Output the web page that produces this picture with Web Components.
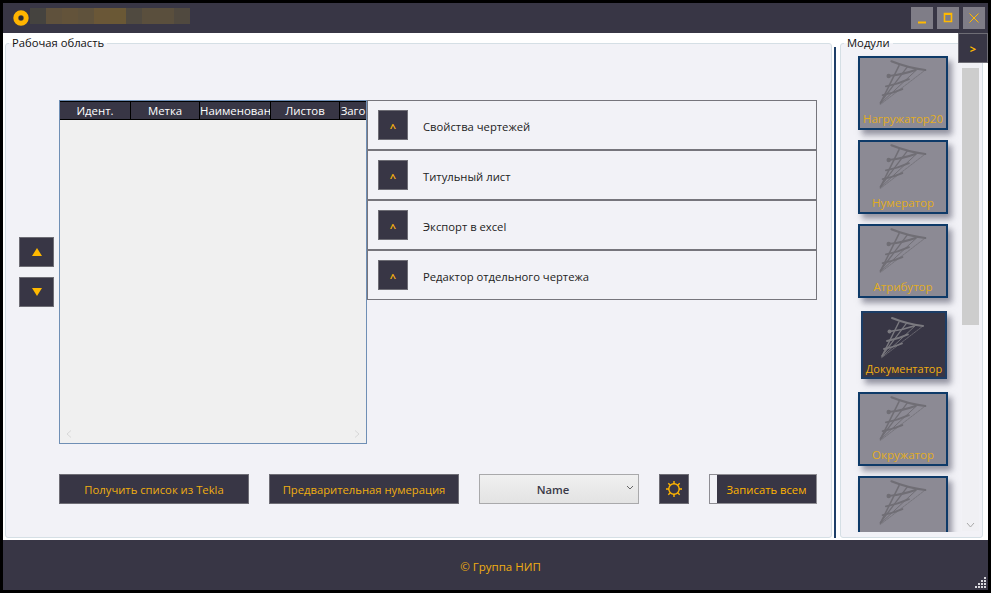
<!DOCTYPE html>
<html lang="ru">
<head>
<meta charset="utf-8">
<title>Документатор</title>
<style>
  html, body { margin: 0; height: 100%; }
  body { background: #000; font: 11.25px "Open Sans", "Noto Sans", sans-serif; overflow: hidden; }
</style>
</head>
<body>
<app-window>
  <title-bar slot="title"></title-bar>
  <group-box slot="work" label="Рабочая область" style="flex:1"><work-area></work-area></group-box>
  <group-box slot="modules" label="Модули" style="width:143px"><module-list></module-list></group-box>
</app-window>

<script>
(function() {
  'use strict';

  const AMBER = '#f0ae10';

  const webIcon = (w, h) => `
    <svg class="web" width="${w}" height="${h}" viewBox="0 0 50 44" fill="none" stroke="currentColor" stroke-linecap="round">
      <path d="M13 3Q28 9 44 11" stroke-width="2"/>
      <path d="M20 7L3.3 40.6" stroke-width="1.4"/>
      <path d="M27.6 8.2L2.7 41.2" stroke-width="1.2"/>
      <path d="M36.7 10.3L2.7 42" stroke-width=".9"/>
      <path d="M44 11L3 42.5" stroke-width=".7" stroke-dasharray="2 1"/>
      <path d="M11 16.4Q24 15 35 11M8 26Q19 24 29 19.4M5 34Q15 32 23 28.5" stroke-width="1.8"/>
      <circle cx="10.5" cy="16.5" r="2"  fill="currentColor" stroke="none"/>
    </svg>`;

  // base class so every element just declares its template
  class Base extends HTMLElement {
    constructor() {
      super();
      this.attachShadow({ mode: 'open' });
    }
    connectedCallback() {
      this.shadowRoot.innerHTML = this.render();
    }
  }

  class AppWindow extends Base {
    render() {
      return `
        <style>
          :host { display: flex; flex-direction: column; position: absolute; inset: 3px; background: #fff; }
          main { flex: 1; display: flex; min-height: 0; padding: 5px 5px 2px 2px; background: #fff; }
          .split { width: 2px; margin: 9px 4px 0 2px; background: #1f3f68; }
          footer { height: 50px; background: #383645; color: ${AMBER}; display: flex; align-items: center;
            justify-content: center; position: relative; padding: 2px 0 0 10px; box-sizing: border-box; font-size: 11.5px; }
          .grip { position: absolute; right: 2px; bottom: 2px; }
          .toggle { position: absolute; top: 30px; right: 0; width: 30px; height: 30px; box-sizing: border-box;
            background: #383645; border: 1px solid #6e6d75; color: #ffb900; display: flex; align-items: center;
            justify-content: center; font-size: 11px; font-weight: 700; }
        </style>
        <slot name="title"></slot>
        <main>
          <slot name="work"></slot>
          <div class="split"></div>
          <slot name="modules"></slot>
        </main>
        <footer>© Группа НИП
          <svg class="grip" width="11" height="11" viewBox="0 0 11 11" fill="#d8d8dc">
            <path d="M9 0h2v2H9zM6 3h2v2H6zM9 3h2v2H9zM3 6h2v2H3zM6 6h2v2H6zM9 6h2v2H9zM0 9h2v2H0zM3 9h2v2H3zM6 9h2v2H6zM9 9h2v2H9z"/>
          </svg>
        </footer>
        <div class="toggle">&gt;</div>`;
    }
  }

  class TitleBar extends Base {
    render() {
      const shades = ['#45433f','#5f513c','#63533a','#5f523c','#6a5737','#6a5835','#504a40','#5a4f3d','#5a4f3d','#50493f'];
      return `
        <style>
          :host { display: flex; align-items: center; height: 30px; background: #383645; }
          .logo { width: 16px; height: 16px; margin: 0 0 0 10px; flex: none; }
          .blur { display: flex; height: 16px; margin: 0 0 4px 1px; }
          .blur i { display: block; width: 16px; }
          .btns { margin-left: auto; display: flex; gap: 4px; padding: 0 3px 0 0; }
          .btn { width: 22px; height: 22px; background: #7f7d87; display: flex; align-items: center; justify-content: center; }
        </style>
        <svg class="logo" viewBox="0 0 16 16"><circle cx="8" cy="8" r="5.2" fill="none" stroke="#ffb400" stroke-width="5"/><circle cx="8" cy="8" r="2" fill="#2a2830"/></svg>
        <div class="blur">${shades.map(c => `<i style="background:${c}"></i>`).join('')}</div>
        <div class="btns">
          <div class="btn"><svg width="14" height="14" viewBox="0 0 14 14"><path d="M3 11.5h8" stroke="#ffb900" stroke-width="2"/></svg></div>
          <div class="btn"><svg width="14" height="14" viewBox="0 0 14 14" fill="none"><path d="M3.5 2.5h7v8h-7z" stroke="#ffb900" stroke-width="1.6"/><path d="M3 3h8" stroke="#ffb900" stroke-width="2"/></svg></div>
          <div class="btn"><svg width="14" height="14" viewBox="0 0 14 14"><path d="M2.5 2.5l9 9M11.5 2.5l-9 9" stroke="#ffb900" stroke-width="1"/></svg></div>
        </div>`;
    }
  }

  class GroupBox extends Base {
    render() {
      return `
        <style>
          :host { display: block; min-width: 0; position: relative; padding-top: 5px; box-sizing: border-box; }
          .frame { height: 100%; box-sizing: border-box; border: 1px solid #d5dfe5; border-radius: 3px; background: #f2f2f7; overflow: hidden; }
          .legend { position: absolute; left: 4px; top: -2px; padding: 0 3px; background: linear-gradient(#fff 7px, #f2f2f7 7px); color: #111; line-height: 14px; }
        </style>
        <div class="frame"><slot></slot></div>
        <div class="legend">${this.getAttribute('label')}</div>`;
    }
  }

  class DarkButton extends Base {
    render() {
      return `
        <style>
          :host { display: flex; align-items: center; justify-content: center; box-sizing: border-box; height: 30px;
            background: #383645; border: 1px solid #6e6d75; color: ${AMBER}; white-space: nowrap; }
        </style>
        <slot></slot>`;
    }
  }

  class DrawingTable extends Base {
    render() {
      const cols = [['Идент.', 70], ['Метка', 68], ['Наименован', 70], ['Листов', 68], ['Заго', 26]];
      return `
        <style>
          :host { display: flex; flex-direction: column; width: 308px; height: 344px; box-sizing: border-box; position: relative;
            background: #f0f0f0; border: 1px solid #6f8fb5; }
          .head { display: flex; gap: 1px; height: 19px; background: #000; padding: 1px 0; box-sizing: border-box; overflow: hidden; }
          .head span { flex: none; background: #383645; color: #fff; text-align: center; line-height: 18px; overflow: hidden; white-space: nowrap; height: 17px; font-size: 11.4px; }
          svg { position: absolute; bottom: 5px; }
        </style>
        <div class="head">${cols.map(c => `<span style="width:${c[1]}px">${c[0]}</span>`).join('')}</div>
        <svg style="left:6px" width="6" height="8" viewBox="0 0 6 8" fill="none"><path d="M5 .5L1 4l4 3.5" stroke="#d8d8d8"/></svg>
        <svg style="right:6px" width="6" height="8" viewBox="0 0 6 8" fill="none"><path d="M1 .5L5 4 1 7.5" stroke="#d8d8d8"/></svg>`;
    }
  }

  class AccordionRow extends Base {
    render() {
      return `
        <style>
          :host { display: flex; align-items: center; gap: 15px; height: 50px; box-sizing: border-box; padding-left: 10px;
            border: 1px solid #76757c; color: #222; }
          dark-button { width: 30px; font-size: 11px; font-weight: 700; padding-top: 4px; }
          span { padding-top: 3px; }
        </style>
        <dark-button>^</dark-button>
        <span><slot></slot></span>`;
    }
  }

  class WorkArea extends Base {
    render() {
      return `
        <style>
          :host { display: flex; flex-direction: column; height: 100%; box-sizing: border-box; padding: 56px 0 0 13px; }
          .top { display: flex; }
          .arrows { width: 35px; margin: 137px 5px 0 0; display: flex; flex-direction: column; gap: 10px; }
          .rows { width: 450px; }
          .bottom { display: flex; margin: 30px 0 0 40px; }
          .combo { width: 160px; height: 30px; box-sizing: border-box; border: 1px solid #a9a9ab; display: flex;
            align-items: center; justify-content: center; position: relative; color: #3a3947; font-weight: 600;
            padding-right: 12px; background: linear-gradient(#f0f0f0, #e3e3e3); }
          .combo svg { position: absolute; right: 4px; top: 10px; }
          .save { width: 108px; margin-left: 20px; display: flex; height: 30px; box-sizing: border-box; border: 1px solid #8e8d93; }
          .save i { width: 7px; background: #f2f2f7; }
          .save span { flex: 1; background: #383645; color: #ffb400; display: flex; align-items: center; justify-content: center; }
        </style>
        <div class="top">
          <div class="arrows">
            <dark-button><svg width="10" height="8" viewBox="0 0 10 8"><path d="M5 0l5 8H0z" fill="#ffb900"/></svg></dark-button>
            <dark-button><svg width="10" height="8" viewBox="0 0 10 8"><path d="M0 0h10L5 8z" fill="#ffb900"/></svg></dark-button>
          </div>
          <drawing-table></drawing-table>
          <div class="rows">
            <accordion-row>Свойства чертежей</accordion-row>
            <accordion-row>Титульный лист</accordion-row>
            <accordion-row>Экспорт в excel</accordion-row>
            <accordion-row>Редактор отдельного чертежа</accordion-row>
          </div>
        </div>
        <div class="bottom">
          <dark-button style="width:190px">Получить список из Tekla</dark-button>
          <dark-button style="width:190px;margin-left:20px">Предварительная нумерация</dark-button>
          <div class="combo" style="margin-left:20px">Name
            <svg width="8" height="6" viewBox="0 0 8 6" fill="none"><path d="M1 1l3 3 3-3" stroke="#666"/></svg>
          </div>
          <dark-button style="width:30px;margin-left:20px">
            <svg width="18" height="18" viewBox="0 0 18 18" fill="none" stroke="#ffb400" stroke-width="1.4">
              <circle cx="9" cy="9" r="5.2"/>
              <path d="M9 1v3M9 14v3M1 9h3M14 9h3M3.3 3.3l2 2M12.7 12.7l2 2M14.7 3.3l-2 2M5.3 12.7l-2 2"/>
            </svg>
          </dark-button>
          <div class="save"><i></i><span>Записать всем</span></div>
        </div>`;
    }
  }

  class ModuleCard extends Base {
    render() {
      const active = this.hasAttribute('active');
      return `
        <style>
          :host { display: block; box-sizing: border-box; position: relative; flex: none; text-align: center; white-space: nowrap;
            width: ${active ? 86 : 90}px; height: ${active ? 68 : 74}px; margin-left: ${active ? 3 : 0}px;
            border: 2px solid ${active ? '#1c3d66' : '#0e3a68'};
            background: ${active ? '#383645' : '#8c8a94'}; color: ${active ? AMBER : '#e2ad22'};
            box-shadow: 4px 5px 6px rgba(70,70,90,.55); font-size: ${active ? 11 : 11.5}px; }
          .web { position: absolute; left: ${active ? 16 : 17}px; top: ${active ? 2 : 0}px; color: ${active ? '#7a797f' : '#706e75'}; }
          span { position: absolute; left: 0; right: 0; bottom: ${active ? 0 : 1}px; line-height: 16px; }
        </style>
        ${active ? webIcon(50, 44) : webIcon(55, 48)}
        <span><slot></slot></span>`;
    }
  }

  class ModuleList extends Base {
    render() {
      return `
        <style>
          :host { display: block; height: 100%; position: relative; box-sizing: border-box; overflow: hidden; padding: 0 0 5px; }
          .pane { height: 100%; overflow: hidden; padding: 12px 0 0 17px; box-sizing: border-box; display: flex; flex-direction: column; }
          module-card:nth-child(2), module-card:nth-child(3) { margin-top: 10px; }
          module-card:nth-child(4) { margin-top: 13px; }
          module-card:nth-child(5) { margin-top: 13px; }
          module-card:nth-child(6) { margin-top: 10px; }
          .bar { position: absolute; right: 3px; top: 12px; bottom: 6px; width: 17px; background: #f0f0f4; }
          .thumb { position: absolute; top: 12px; left: 0; right: 0; height: 257px; background: #cdcdcd; }
          .bar svg { position: absolute; left: 4px; bottom: 3px; }
        </style>
        <div class="pane">
          <module-card>Нагружатор20</module-card>
          <module-card>Нумератор</module-card>
          <module-card>Атрибутор</module-card>
          <module-card active>Документатор</module-card>
          <module-card>Окружатор</module-card>
          <module-card></module-card>
        </div>
        <div class="bar"><div class="thumb"></div>
          <svg width="9" height="6" viewBox="0 0 9 6" fill="none"><path d="M1 1l3.5 4L8 1" stroke="#a8a8a8"/></svg>
        </div>`;
    }
  }

  customElements.define('app-window', AppWindow);
  customElements.define('title-bar', TitleBar);
  customElements.define('group-box', GroupBox);
  customElements.define('dark-button', DarkButton);
  customElements.define('drawing-table', DrawingTable);
  customElements.define('accordion-row', AccordionRow);
  customElements.define('work-area', WorkArea);
  customElements.define('module-card', ModuleCard);
  customElements.define('module-list', ModuleList);
})();
</script>
</body>
</html>
